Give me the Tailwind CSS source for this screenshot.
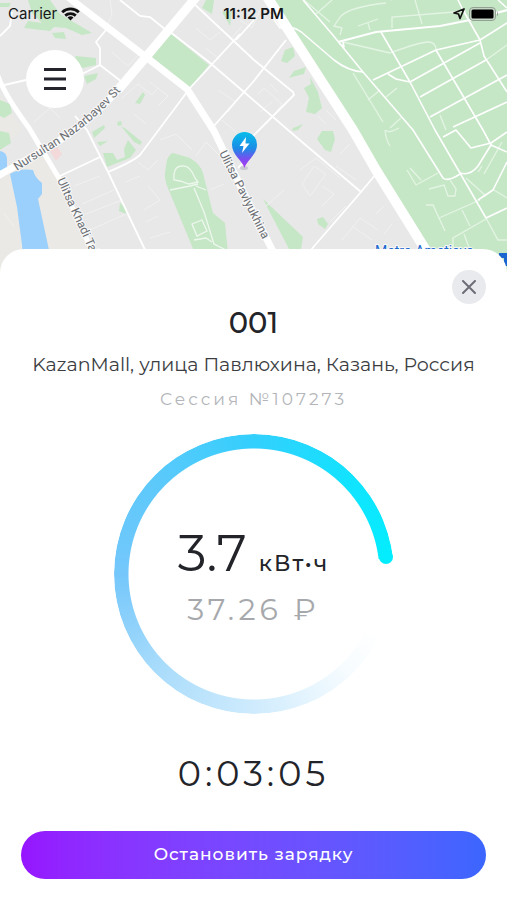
<!DOCTYPE html>
<html lang="ru">
<head>
  <meta charset="UTF-8" />
  <meta name="viewport" content="width=device-width, initial-scale=1.0" />
  <title>Зарядка 001</title>
  <script src="https://cdn.jsdelivr.net/npm/@tailwindcss/browser@4"></script>
</head>
<body class="bg-white text-[#222429] font-[Montserrat,Inter,sans-serif]">
  <div class="min-h-screen flex flex-col">

    <!-- Карта -->
    <section class="relative h-[273px] bg-[#e8e8e8] overflow-hidden">
      <svg class="absolute inset-0 w-full h-full" viewBox="0 0 507 273" preserveAspectRatio="xMidYMin slice" aria-label="Карта">
        <defs>
          <linearGradient id="pin" x1="0" y1="0" x2="0" y2="1">
            <stop offset="0" stop-color="#08bdea" />
            <stop offset="0.45" stop-color="#1b8de6" />
            <stop offset="0.75" stop-color="#7a4df0" />
            <stop offset="1" stop-color="#b03cf5" />
          </linearGradient>
          <path id="nazarbayev" d="M17 171 L45 153 Q92 125 124 87" />
          <path id="khadi" d="M57 180 L98 270" />
          <path id="pavlyukhina" d="M219 153 L268 250" />
        </defs>
        <rect width="507" height="273" fill="#e8e8e8" />
        <path d="M0 176 L40 152 L58 180 L102 273 L0 273Z M0 95 L22 130 L8 142 L0 140Z" fill="#ebe9e5" />

        <!-- вода -->
        <g fill="#9bd0fc">
          <path d="M10 174 Q20 168 33 170 Q35 178 42 183 V194 L38 199 L49 250 L54 273 H24 L22 245 L17 207Z" />
          <path d="M0 151 Q6 152 7 158 V168 L0 172Z" />
        </g>

        <!-- парки -->
        <g fill="#c5e7c6">
          <path d="M266 0 H507 V273 H443 L353 130 L276 8Z" />
          <path d="M170 33 L209 65 L190 88 L152 57Z" />
          <path d="M167 160 Q170 153 173 153 Q184 156 190 158 Q201 165 203 173 L208 193 L213 213 L225 223 L230 273 H203 L170 193 Q164 180 165 173Z" />
          <path d="M28 0 H50 L60 14 L92 33 L82 35 L66 28 L54 27 L50 31 L24 28 L28 21 L42 23 L32 13Z" />
          <path d="M52 33 L64 32 L66 39 L55 38Z M76 56 L96 58 V65 L78 69 L72 62Z M84 76 L98 73 L96 79 L87 84Z M0 3 H11 L9 7 L0 7Z" />
          <path d="M206 0 H214 L212 14 L202 8Z M135 103 L143 92 L145 95 L140 104Z M222 12 L232 10 L230 26Z" />
          <path d="M103 153 L113 153 L117 160 L125 157 L124 149 L128 140 L136 150 L130 158 L107 167Z" />
          <path d="M121 126 L126 129 L142 142 L140 145 L134 142Z M92 132 L104 125 L105 128 L94 138Z M97 142 L108 141 L100 146Z M117 122 L121 121 L122 125 L118 126Z" />
          <path d="M120 203 L126 208 L126 214 L119 211Z" />
          <path d="M0 100 L10 104 L12 113 L4 118 L0 116Z M0 131 L9 133 L11 143 L0 150Z" />
          <path d="M285 50 L293 47 L295 56 L287 63 L281 61Z M289 78 L294 71 L306 67 L304 74 L296 76Z M304 88 L311 84 L310 77 L318 92 L322 108 L315 114 L306 112 L309 98Z M293 128 L303 124 L298 130 L292 131Z" />
          <path d="M317 139 L322 131 L333 131 L335 139 L331 152 L325 150Z M317 219 L323 217 L328 224 L325 229 L318 224Z" />
          <path d="M263 199 L303 237 L301 249 H289Z" />
        </g>
        <path d="M50 151 L57 146 L62 154 L56 161Z" fill="#f3d9d9" />

        <!-- дворы и проезды -->
        <g fill="none" stroke="#f1f1f1" stroke-width="1">
          <path d="M105 32 L112 14 L110 0 M112 52 L128 66 L138 55 M122 98 L138 84 L152 95 L158 88 M150 82 L168 96 L158 106 M134 114 L146 124 M196 28 L210 40 L220 32 M206 48 L220 60 M230 40 L242 26 M218 90 L236 102 L228 112 M34 122 L50 108 L60 118 M66 66 L70 80 L60 92" />
          <path d="M258 94 L264 88 L282 104 L276 112 M260 112 L272 102 M222 120 L236 132 M160 140 L176 134 L192 150 M138 162 L148 170 L158 160 M148 186 L160 200 L144 210 M126 182 L140 176 M74 186 L100 176 M82 204 L114 190 M86 214 L122 200 M90 230 L126 214 M146 222 L158 216 M150 238 L170 232 M196 156 L206 142 L220 156 M210 190 L224 184" />
          <path d="M302 184 L314 166 L326 174 L310 196Z M300 170 L316 158 L340 178 M322 186 L334 194 L322 206 M340 154 L350 144 M336 166 L356 180 M266 206 L284 190 M330 222 L346 206 M342 240 L360 218 L378 230 M352 226 L372 240 M376 214 L384 206 M392 224 L384 234" />
          <path d="M260 10 L252 28 L240 20 M270 84 L278 92 M318 116 L326 124 M326 110 L336 120 M4 214 L14 226" />
        </g>

        <!-- дорожки в парках -->
        <g fill="none" stroke="#e4f4e4" stroke-width="1.3">
          <path d="M304 0 L330 22 M316 14 L332 0 M340 35 L342 28 L334 26 L341 16 Q350 7 386 3 M358 26 L378 19 M368 23 L370 30 M392 28 V17 L466 11 M415 0 L422 24 M343 42 L390 53 Q420 42 428 42 Q436 42 436 50 M353 73 L383 122 M368 100 L380 90 M386 97 L397 88 M390 128 L401 118 M390 0 L404 -4 M486 60 L507 45 M440 115 L446 130" />
          <path d="M407 170 L416 185 L438 173 M410 168 L421 180 M429 189 L444 185 L448 196 L455 196 L456 189 L450 180 M426 205 L433 205 L445 231 M439 218 L480 200 M462 210 L470 226 M385 130 Q386 140 390 146 M386 130 Q388 134 399 128 M466 178 L486 196 M484 174 L502 142 M478 172 L482 166 M494 190 L507 198 M464 234 L470 250 M486 218 L498 240 H507 M453 249 V238 L486 219" />
        </g>
        <g fill="none" stroke="#eef7ee" stroke-width="1.3">
          <path d="M174 180 Q173 166 182 166 Q190 165 195 178 L198 182 L189 184 L180 181Z M170 190 L190 186 L198 184 M196 186 L206 190 M194 188 L204 212 L214 244 L230 252 M192 224 L202 220 L207 231 L197 236Z M194 240 L206 238 L212 242" />
        </g>

        <!-- улицы -->
        <g fill="none" stroke="#fff" stroke-width="1.6" stroke-linejoin="round">
          <path d="M338 42 L376 32 L440 26 L470 20 L507 10" stroke-width="2.2" />
          <path d="M303 0 L332 34 L363 72 L413 130 L443 178 Q448 182 460 174" />
          <path d="M270 14 L280 28 Q294 24 306 36 L334 60 Q348 71 363 72 M343 42 L344 47 L339 43" />
          <path d="M381 32 L410 82 L435 130 L460 173 L486 218" />
          <path d="M373 80 L436 50 L480 40 L507 23 M410 82 L480 43 M388 74 L396 79 L410 82 M420 97 L486 60 M430 117 L507 75 M436 50 L483 130 L491 145 M463 10 L480 40 L484 56 L507 92 M453 127 L507 102 M463 10 L458 0 M498 0 L507 8" />
          <path d="M443 137 L456 130 L471 148 L491 143 L507 132 M460 173 Q470 176 478 166 L491 145 L507 152 M478 200 L493 190 L507 162 M486 218 L507 208" />
        </g>
        <g fill="none" stroke="#fff" stroke-width="1.8">
          <path d="M165 28 L209 62 L244 92 L295 136 L361 192 M190 0 L254 60 L293 92 L294 95 L272 117 L253 136 M286 40 L253 82 L213 127 M240 34 L190 88 L140 155 Q132 162 108 172 M254 20 L236 40" />
          <path d="M376 174 L361 192 L310 251 M75 116 L87 130 L108 172 L146 252 M60 176 L100 157 M120 0 L140 16 L150 17 L166 30 M106 30 L96 42 L100 48 V65 L78 76 M100 65 L122 82 M0 86 L26 80 M0 36 L10 26 L12 12 M238 168 L246 160" />
        </g>
        <g fill="none" stroke="#fff" stroke-linejoin="round">
          <path d="M68 -3 L146 57 L187 89 L214 131 L254 214 L284 273" stroke-width="7" />
          <path d="M198 -5 L146 57 L118 90" stroke-width="9" />
          <path d="M118 90 Q84 128 40 152 L-4 177" stroke-width="7" />
          <path d="M-2 76 Q4 94 29 128 L60 180 L102 273" stroke-width="5" />
          <path d="M264 -8 L282 20 L353 130 L376 170 L440 273" stroke-width="10" />
        </g>

        <!-- подписи -->
        <g class="font-[Roboto,sans-serif]" font-size="12" fill="#6b6e73" stroke="#f8f8f8" stroke-width="2" paint-order="stroke">
          <text><textPath href="#nazarbayev">Nursultan Nazarbayev St</textPath></text>
          <text><textPath href="#khadi">Ulitsa Khadi Taktasha</textPath></text>
          <text><textPath href="#pavlyukhina">Ulitsa Pavlyukhina</textPath></text>
          <text x="375" y="256" font-size="14" fill="#1b66cf">Metro Ametievo</text>
        </g>
        <path d="M499 253 H507 V266 H504 V258 H499Z" fill="#1b66cf" />

        <!-- станция -->
        <ellipse cx="244" cy="168" rx="4" ry="2" fill="#c9c9d2" />
        <path d="M244.500 168 C242 160 232 155 232 144.500 A12.500 12.500 0 0 1 257 144.500 C257 155 247 160 244.500 168Z" fill="url(#pin)" />
        <path d="M246 137 L239.500 146 H243.500 L242 153 L249.500 143.500 H245.500Z" fill="#fff" />
      </svg>

      <!-- Статус -->
      <div class="relative grid grid-cols-3 items-center h-7 px-2 text-[15px] text-[#17181a] font-[Inter,sans-serif]">
        <div class="flex items-center gap-1">
          <span>Carrier</span>
          <svg class="w-[19px] h-[14px]" viewBox="0 0 19 14" fill="none" stroke="#111" stroke-width="2.800">
            <path d="M1.200 5.200 A12 12 0 0 1 17.800 5.200" />
            <path d="M4.200 8.600 A8 8 0 0 1 14.800 8.600" />
            <path d="M9.500 13.500 L6.500 10.500 Q9.500 8 12.500 10.500Z" fill="#111" stroke="none" />
          </svg>
        </div>
        <span class="text-center font-semibold">11:12 PM</span>
        <div class="flex items-center justify-end gap-1">
          <svg class="w-3 h-3" viewBox="0 0 12 12" fill="none" stroke="#111" stroke-width="1.700" stroke-linejoin="round">
            <path d="M11 1 L7 10.500 L5.500 6 L1 5Z" />
          </svg>
          <svg class="w-[30px] h-[14px]" viewBox="0 0 30 14">
            <rect x="0.500" y="0.500" width="26" height="13" rx="3.500" fill="#c5d6c5" stroke="#93a194" />
            <rect x="2.500" y="2.500" width="22" height="9" rx="1.500" fill="#000" />
            <path d="M28 4.500 Q30 7 28 9.500Z" fill="#8f9a90" />
          </svg>
        </div>
      </div>

      <button type="button" aria-label="Меню" class="relative mt-[22px] ml-[26px] flex items-center justify-center size-[58px] rounded-full bg-white">
        <svg class="w-[22px] h-[22px]" viewBox="0 0 22 22" stroke="#24252c" stroke-width="2.800">
          <path d="M0 1.500 H22 M0 11 H22 M0 20.500 H22" />
        </svg>
      </button>
    </section>

    <!-- Сессия зарядки -->
    <main class="relative -mt-6 flex-1 flex flex-col items-center rounded-t-3xl bg-white px-[21px] pt-[21px] pb-5">
      <button type="button" aria-label="Закрыть" class="self-end flex items-center justify-center size-[34px] rounded-full bg-[#e9eaed]">
        <svg class="size-[14px]" viewBox="0 0 14 14" stroke="#6c6f78" stroke-width="2" stroke-linecap="round">
          <path d="M1 1 L13 13 M13 1 L1 13" />
        </svg>
      </button>

      <h1 class="mt-[3px] text-[29px] leading-8 font-medium">001</h1>
      <p class="mt-[14px] text-[19px] leading-6 text-[#3b3d42] whitespace-nowrap">KazanMall, улица Павлюхина, Казань, Россия</p>
      <p class="mt-3 text-[17px] leading-5 tracking-[3px] text-[#b3b5ba]">Сессия №107273</p>

      <div class="relative mt-[25px] size-[280px] flex flex-col items-center justify-center">
        <div class="absolute inset-0 rounded-full bg-[conic-gradient(#33cffd_0deg,#12e3ff_45deg,#04edff_83deg,transparent_83deg,#ffffff_115deg,#f7fcff_135deg,#e6f5fe_155deg,#cfebfd_180deg,#a9dcfb_225deg,#74c7fb_270deg,#5bc9fb_315deg,#33cffd_360deg)] [mask-image:radial-gradient(closest-side,transparent_125px,black_126px)]"></div>
        <div class="absolute left-[265px] top-[116px] size-[14px] rounded-full bg-[#04edff]"></div>
        <p class="flex items-baseline gap-3 leading-[60px]">
          <span class="text-[51px]">3.7</span>
          <span class="text-[22px] font-medium tracking-[2px]">кВт•ч</span>
        </p>
        <p class="text-[30px] leading-8 tracking-[4px] text-[#a6a8ac]">37.26 ₽</p>
      </div>

      <p class="mt-[37px] text-[35px] leading-[46px] tracking-[4px]">0:03:05</p>

      <button type="button" class="mt-[34px] w-full h-12 rounded-full bg-linear-to-r from-[#9614ff] to-[#3b66ff] text-[17px] font-medium tracking-[1px] text-white">Остановить зарядку</button>
    </main>
  </div>
</body>
</html>
